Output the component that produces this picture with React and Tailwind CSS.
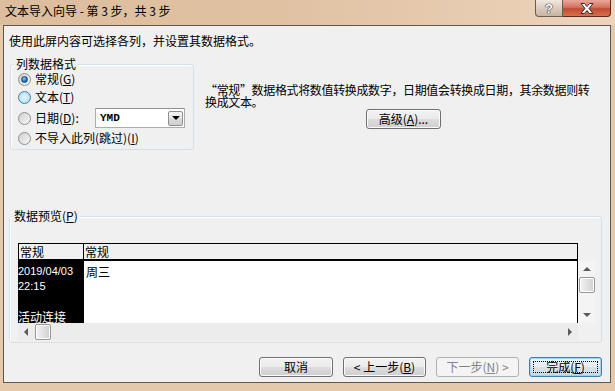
import React from 'react'

const btnBase = "h-[20px] rounded-[3px] border flex items-center justify-center text-[12px] leading-[12px]"
const btnNormal = "border-[#707070] bg-[linear-gradient(#f2f2f2_0%,#ebebeb_49%,#dddddd_50%,#cfcfcf_100%)] shadow-[inset_0_0_0_1px_#fbfbfb]"

function Radio({ checked, hover }) {
  return (
    <div
      className={`w-[13px] h-[13px] rounded-full border shrink-0 flex items-center justify-center ${
        hover
          ? "border-[#3c7fb1] bg-[radial-gradient(circle,#e8f6fd_0%,#b9e1f6_70%,#8fcbee_100%)]"
          : "border-[#8e8f8f] bg-[linear-gradient(135deg,#cfcfcf,#f7f7f7)]"
      }`}
    >
      {checked && (
        <div className="w-[7px] h-[7px] rounded-full bg-[radial-gradient(circle_at_40%_35%,#9fd4f5_0%,#2f7fc0_45%,#0d3f73_100%)] border border-[#1b4f80]"></div>
      )}
    </div>
  )
}

function Btn({ children, className }) {
  return <div className={`${btnBase} ${btnNormal} ${className}`}>{children}</div>
}

function Up() {
  return <div className="w-0 h-0 border-l-[4px] border-r-[4px] border-b-[4px] border-l-transparent border-r-transparent border-b-[#5a5a5a]"></div>
}
function Down() {
  return <div className="w-0 h-0 border-l-[4px] border-r-[4px] border-t-[4px] border-l-transparent border-r-transparent border-t-[#5a5a5a]"></div>
}
function Left() {
  return <div className="w-0 h-0 border-t-[4px] border-b-[4px] border-r-[4px] border-t-transparent border-b-transparent border-r-[#5a5a5a]"></div>
}
function Right() {
  return <div className="w-0 h-0 border-t-[4px] border-b-[4px] border-l-[4px] border-t-transparent border-b-transparent border-l-[#5a5a5a]"></div>
}

const thumb = "rounded-[2px] border border-[#979797] bg-[linear-gradient(90deg,#f3f3f3,#e2e2e2_50%,#cfcfcf)] shadow-[inset_0_0_0_1px_#fff]"

export default function App() {
  return (
    <div className="w-[615px] h-[391px] bg-[#e6c8aa] flex flex-col font-['Noto_Sans_CJK_SC','Noto_Sans',sans-serif] text-[12px] leading-[12px] text-black overflow-hidden">
      {/* title bar */}
      <div className="h-[25px] shrink-0 flex items-start bg-[linear-gradient(90deg,#dcbd9e,#e0c1a2_45%,#edd4bc)]">
        <div className="flex-1 pl-[5px] pt-[4px] leading-[14px] text-[12px]">文本导入向导 - 第 3 步，共 3 步</div>
        <div className="flex mr-[4px]">
          <div className="w-[28px] h-[17px] border border-t-0 border-[#6b5d52] rounded-bl-[4px] bg-[linear-gradient(#f1e8df,#dccbbc_50%,#c9b4a2)] flex items-center justify-center text-white font-bold text-[13px] leading-[13px] [text-shadow:0_0_1px_#333,0_0_1px_#333,0_0_1px_#333] font-['Liberation_Sans',sans-serif]">?</div>
          <div className="w-[48px] h-[17px] border border-t-0 border-l-0 border-[#5a2a20] rounded-br-[4px] bg-[linear-gradient(#e9a89a,#d5725f_45%,#c14b33_55%,#d8704f)] flex items-center justify-center">
            <svg width="14" height="11" viewBox="0 0 14 11">
              <path d="M1 0.5 H4.5 L7 3.5 L9.5 0.5 H13 L9 5.5 L13 10.5 H9.5 L7 7.5 L4.5 10.5 H1 L5 5.5 Z" fill="#fff" stroke="#3a2a2a" strokeWidth="1" strokeLinejoin="round" />
            </svg>
          </div>
        </div>
      </div>

      {/* client area */}
      <div className="ml-[3px] mr-[4px] h-[358px] shrink-0 border border-[#5f5750] bg-[#f0f0f0] flex flex-col">
        <div className="mt-[9px] ml-[5px] h-[12px]">使用此屏内容可选择各列，并设置其数据格式。</div>

        <div className="mt-[17px] flex items-start">
          {/* column format group */}
          <div className="relative ml-[6px] w-[184px] h-[86px] border border-[#d5dfe5] rounded-[3px] shadow-[inset_1px_1px_0_#fff]">
            <div className="absolute -top-[7px] left-[3px] px-[2px] bg-[#f0f0f0] h-[12px]">列数据格式</div>
            <div className="pt-[6px] pl-[7px] flex flex-col">
              <div className="h-[16px] flex items-center">
                <Radio checked />
                <span className="ml-[4px]">常规(<u>G</u>)</span>
              </div>
              <div className="mt-[2px] h-[16px] flex items-center">
                <Radio hover />
                <span className="ml-[4px]">文本(<u>T</u>)</span>
              </div>
              <div className="mt-[3px] h-[20px] flex items-center">
                <Radio />
                <span className="ml-[4px] w-[60px]">日期(<u>D</u>):</span>
                <div className="w-[90px] h-[20px] border border-[#abadb3] border-t-[#8e8f8f] bg-white flex items-center">
                  <span className="ml-[4px] flex-1 font-['Liberation_Mono',monospace] font-bold text-[11px]">YMD</span>
                  <div className="mr-[1px] w-[15px] h-[15px] border border-[#8e8f8f] rounded-[2px] bg-[linear-gradient(#f2f2f2,#ebebeb_49%,#dddddd_50%,#cfcfcf)] flex items-center justify-center">
                    <div className="w-0 h-0 border-l-[4px] border-r-[4px] border-t-[4px] border-l-transparent border-r-transparent border-t-black"></div>
                  </div>
                </div>
              </div>
              <div className="mt-[2px] h-[16px] flex items-center">
                <Radio />
                <span className="ml-[4px]">不导入此列(跳过)(<u>I</u>)</span>
              </div>
            </div>
          </div>

          {/* description */}
          <div className="ml-[11px] mt-[20px] flex flex-col">
            <div className="leading-[12px] whitespace-nowrap tracking-[-0.35px]">
              “常规”数据格式将数值转换成数字，日期值会转换成日期，其余数据则转
              <br />
              换成文本。
            </div>
            <Btn className="mt-[1px] ml-[161px] w-[75px]">高级(<u>A</u>)...</Btn>
          </div>
        </div>

        {/* preview group */}
        <div className="relative mt-[66px] ml-[5px] w-[593px] h-[127px] border border-[#d5dfe5] rounded-[3px] shadow-[inset_1px_1px_0_#fff]">
          <div className="absolute -top-[7px] left-[2px] px-[2px] bg-[#f0f0f0] h-[12px]">数据预览(<u>P</u>)</div>
          <div className="pt-[26px] pl-[8px] flex flex-col w-[585px]">
            {/* header */}
            <div className="flex">
              <div className="w-[560px] h-[18px] border-t border-l border-r border-b-2 border-black flex">
                <div className="w-[65px] border-r border-black flex items-end pl-[1px] leading-[14px]">常规</div>
                <div className="flex-1 flex items-end pl-[1px] leading-[14px]">常规</div>
              </div>
            </div>
            {/* body */}
            <div className="flex h-[62px]">
              <div className="w-[66px] bg-black text-white overflow-hidden pt-[3px]">
                <div className="h-[15px] leading-[15px] font-['Liberation_Sans',sans-serif] text-[11px]">2019/04/03</div>
                <div className="h-[15px] leading-[15px] font-['Liberation_Sans',sans-serif] text-[11px]">22:15</div>
                <div className="h-[15px]"></div>
                <div className="h-[15px] leading-[15px]">活动连接</div>
              </div>
              <div className="w-[494px] bg-white border-r border-black pt-[3px] pl-[2px]">
                <div className="h-[15px] leading-[15px]">周三</div>
              </div>
              <div className="w-[17px] bg-[#f4f4f4] flex flex-col items-center">
                <div className="mt-[6px]"><Up /></div>
                <div className={`mt-[6px] w-[16px] h-[16px] ${thumb}`}></div>
                <div className="mt-[20px]"><Down /></div>
              </div>
            </div>
            {/* horizontal scroll */}
            <div className="flex">
              <div className="w-[560px] h-[17px] bg-[#ececec] flex items-center">
                <div className="ml-[6px]"><Left /></div>
                <div className={`ml-[7px] w-[16px] h-[16px] ${thumb}`}></div>
                <div className="ml-auto mr-[6px]"><Right /></div>
              </div>
            </div>
          </div>
        </div>

        {/* buttons */}
        <div className="mt-[14px] flex justify-end gap-[10px] mr-[8px]">
          <Btn className="w-[74px]">取消</Btn>
          <Btn className="w-[83px]">&lt; 上一步(<u>B</u>)</Btn>
          <div className={`${btnBase} w-[83px] border-[#adb2b5] bg-[#f4f4f4] text-[#838383]`}>下一步(<u>N</u>) &gt;</div>
          <div className={`${btnBase} relative w-[73px] border-[#3c7fb1] bg-[linear-gradient(#eef4f8_0%,#e6edf2_49%,#d8e2e9_50%,#cdd8e0_100%)] shadow-[inset_0_0_0_1px_#9fd3f3]`}>
            <div className="absolute inset-[3px] border border-dotted border-black"></div>
            完成(<u>F</u>)
          </div>
        </div>
      </div>
    </div>
  )
}
